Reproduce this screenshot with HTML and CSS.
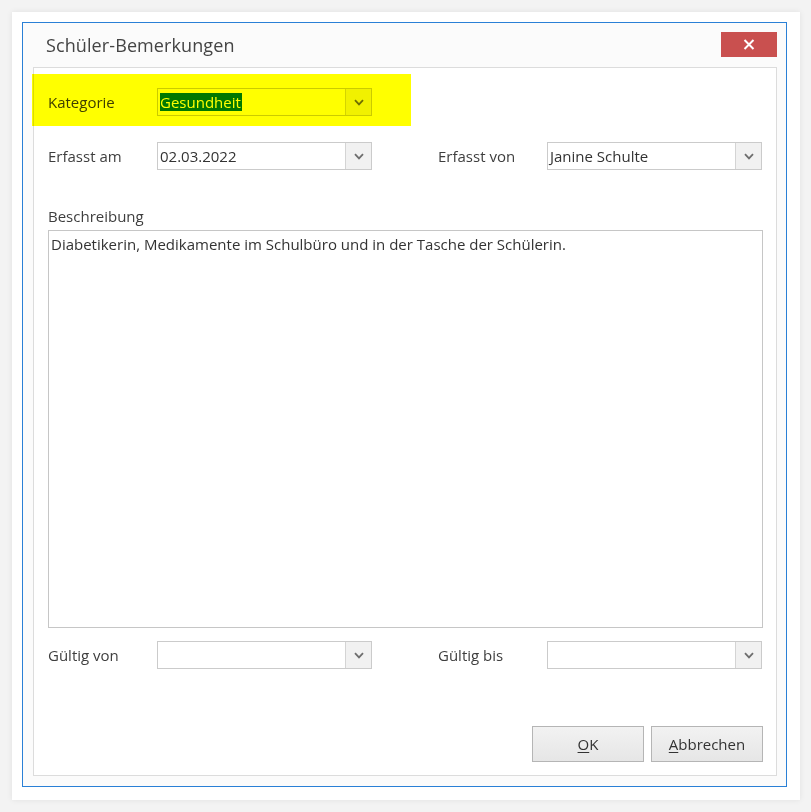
FILE: index.html
```html
<!DOCTYPE html>
<html lang="de">
<head>
<meta charset="utf-8">
<title>Schüler-Bemerkungen</title>
<link rel="stylesheet" href="styles.css">
</head>
<body>
<div class="frame">
  <div class="window">
    <div class="titlebar">
      <span class="title">Schüler-Bemerkungen</span>
      <button class="close" aria-label="Schließen">
        <svg width="12" height="11" viewBox="0 0 12 11"><path d="M1.5 1 L10.5 10 M10.5 1 L1.5 10" stroke="#fff" stroke-width="2" fill="none"/></svg>
      </button>
    </div>
    <div class="panel">
      <div class="highlight"></div>
      <div class="row">
        <div class="field">
          <span class="label">Kategorie</span>
          <div class="combo"><span class="value"><span class="selected">Gesundheit</span></span><span class="drop"><svg width="10" height="7" viewBox="0 0 10 7"><path d="M1 1.2 L5 5.4 L9 1.2" stroke="#6e6e6e" stroke-width="1.8" fill="none"/></svg></span></div>
        </div>
      </div>
      <div class="row">
        <div class="field">
          <span class="label">Erfasst am</span>
          <div class="combo"><span class="value">02.03.2022</span><span class="drop"><svg width="10" height="7" viewBox="0 0 10 7"><path d="M1 1.2 L5 5.4 L9 1.2" stroke="#6e6e6e" stroke-width="1.8" fill="none"/></svg></span></div>
        </div>
        <div class="field">
          <span class="label">Erfasst von</span>
          <div class="combo"><span class="value">Janine Schulte</span><span class="drop"><svg width="10" height="7" viewBox="0 0 10 7"><path d="M1 1.2 L5 5.4 L9 1.2" stroke="#6e6e6e" stroke-width="1.8" fill="none"/></svg></span></div>
        </div>
      </div>
      <div class="desc">
        <span class="label">Beschreibung</span>
        <div class="textarea">Diabetikerin, Medikamente im Schulbüro und in der Tasche der Schülerin.</div>
      </div>
      <div class="row row-valid">
        <div class="field">
          <span class="label">Gültig von</span>
          <div class="combo"><span class="value"></span><span class="drop"><svg width="10" height="7" viewBox="0 0 10 7"><path d="M1 1.2 L5 5.4 L9 1.2" stroke="#6e6e6e" stroke-width="1.8" fill="none"/></svg></span></div>
        </div>
        <div class="field">
          <span class="label">Gültig bis</span>
          <div class="combo"><span class="value"></span><span class="drop"><svg width="10" height="7" viewBox="0 0 10 7"><path d="M1 1.2 L5 5.4 L9 1.2" stroke="#6e6e6e" stroke-width="1.8" fill="none"/></svg></span></div>
        </div>
      </div>
      <div class="buttons">
        <button class="btn"><u>O</u>K</button>
        <button class="btn"><u>A</u>bbrechen</button>
      </div>
    </div>
  </div>
</div>
</body>
</html>
```
FILE: styles.css
```css
* { box-sizing: border-box; }
html, body { margin: 0; padding: 0; }
body {
  background: #f3f3f3;
  font-family: "Open Sans", "Noto Sans", sans-serif;
  color: #3b3b3b;
  width: 811px;
  height: 812px;
  overflow: hidden;
}
.frame {
  margin: 12px 0 0 12px;
  width: 788px;
  height: 788px;
  background: #ffffff;
  box-shadow: 0 0 6px rgba(0,0,0,0.08);
  padding: 10px;
}
.window {
  width: 765px;
  height: 765px;
  border: 1px solid #2a80d6;
  background: #fbfbfb;
  display: flex;
  flex-direction: column;
  padding: 0 9px 10px 10px;
}
.titlebar {
  height: 44px;
  display: flex;
  align-items: center;
  justify-content: space-between;
  flex-shrink: 0;
}
.title {
  font-size: 18px;
  color: #444;
  margin-left: 13px;
  margin-top: 0px;
  letter-spacing: 0.1px;
}
.close {
  width: 56px;
  height: 25px;
  background: #c9504f;
  border: none;
  padding: 0;
  margin-top: -2px;
  display: flex;
  align-items: center;
  justify-content: center;
}
.panel {
  position: relative;
  flex: 1;
  border: 1px solid #dcdcdc;
  background: #ffffff;
  padding: 20px 13px 13px 14px;
  display: flex;
  flex-direction: column;
}
.highlight {
  position: absolute;
  left: -2px;
  top: 6px;
  width: 379px;
  height: 52px;
  background: #ffff00;
  mix-blend-mode: multiply;
  pointer-events: none;
}
.row {
  display: flex;
  gap: 66px;
  height: 28px;
  margin-bottom: 26px;
}
.field {
  display: flex;
  align-items: center;
}
.label {
  width: 109px;
  font-size: 15px;
  color: #3e3e3e;
}
.combo {
  width: 215px;
  height: 28px;
  border: 1px solid #cbcbcb;
  background: #fff;
  display: flex;
}
.value {
  flex: 1;
  font-size: 15px;
  color: #333;
  padding-left: 2px;
  display: flex;
  align-items: center;
}
.selected {
  background: #0078d7;
  color: #ffffff;
  line-height: 18px;
  padding: 0 1px 0 0;
}
.drop {
  width: 26px;
  border-left: 1px solid #d4d4d4;
  background: #f1f1f1;
  display: flex;
  align-items: center;
  justify-content: center;
}
.desc {
  display: flex;
  flex-direction: column;
  margin-top: 10px;
}
.desc .label {
  width: auto;
  line-height: 20px;
  margin-bottom: 4px;
}
.textarea {
  height: 398px;
  border: 1px solid #c6c6c6;
  padding: 3px 2px;
  font-size: 15px;
  color: #333;
  line-height: 20px;
}
.row-valid {
  margin-top: 13px;
}
.buttons {
  margin-top: auto;
  display: flex;
  justify-content: flex-end;
  gap: 7px;
}
.btn {
  width: 112px;
  height: 36px;
  border: 1px solid #b5b5b5;
  background: linear-gradient(#f2f2f2, #e6e6e6);
  font-family: "Open Sans", "Noto Sans", sans-serif;
  font-size: 15px;
  color: #333;
  padding: 0;
}
.btn u { text-underline-offset: 2px; }
```
